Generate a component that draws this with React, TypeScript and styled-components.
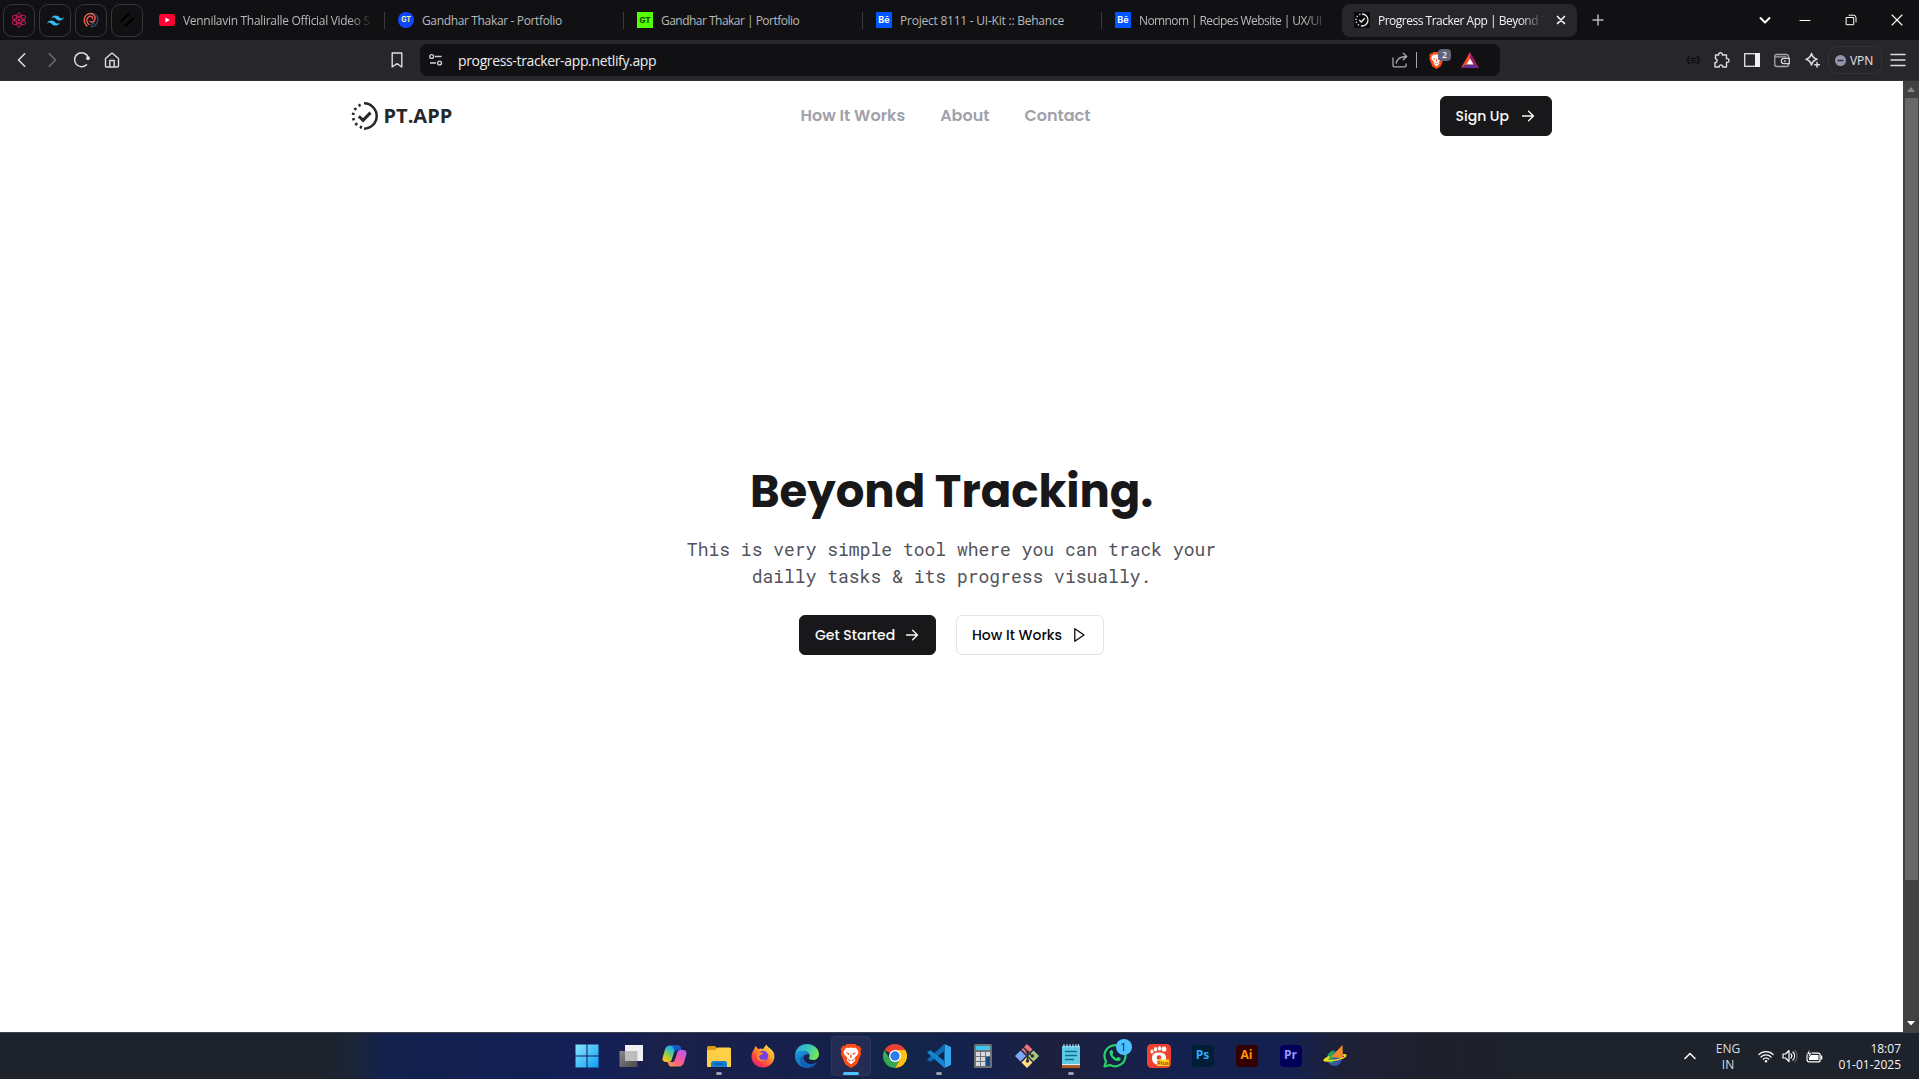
import React from "react";
import styled, { createGlobalStyle, css } from "styled-components";

const ui = `"Segoe UI", "Open Sans", "Noto Sans", sans-serif`;
const brand = `Poppins, Inter, sans-serif`;

const GlobalStyle = createGlobalStyle`
  * { box-sizing: border-box; }
  body { margin: 0; background: #fff; overflow: hidden; }
  svg { display: block; flex: none; }
  h1, p { margin: 0; }
`;

const Screen = styled.div`
  width: 1919px;
  height: 1079px;
  display: flex;
  flex-direction: column;
  overflow: hidden;
  font-family: ${ui};
`;

/* Tab strip */
const TabStrip = styled.div`
  height: 40px;
  flex: none;
  background: #111113;
  display: flex;
  align-items: center;
  padding-left: 3px;
  color: #b9b9bc;
`;
const PinnedTabs = styled.div`
  display: flex;
  gap: 4px;
  margin-right: 4px;
`;
const PinnedTab = styled.div`
  width: 32px;
  height: 33px;
  border: 1px solid #37373b;
  border-radius: 9px;
  display: grid;
  place-items: center;
`;
const TabList = styled.div`
  display: flex;
  gap: 4px;
`;
const Tab = styled.div<{ $active?: boolean; $line?: boolean }>`
  position: relative;
  width: 235px;
  height: 33px;
  border-radius: 8px;
  display: flex;
  align-items: center;
  padding: 0 7px 0 12px;
  gap: 8px;
  ${(p) => p.$active && css`
    background: #26262b;
    color: #f3f3f5;
  `}
  ${(p) => p.$line && css`
    &::after {
      content: "";
      position: absolute;
      right: -3px;
      top: 8px;
      width: 1px;
      height: 17px;
      background: #3a3a3e;
    }
  `}
`;
const TabTitle = styled.span<{ $spacing: number; $fade?: boolean; $width: number }>`
  width: ${(p) => p.$width}px;
  padding-top: 2px;
  overflow: hidden;
  white-space: nowrap;
  font-size: 12px;
  line-height: 20px;
  letter-spacing: ${(p) => p.$spacing}px;
  ${(p) => p.$fade && css`
    mask-image: linear-gradient(90deg, #000 calc(100% - 24px), transparent);
  `}
`;
const TileIcon = styled.span<{ $bg: string; $color: string; $round?: boolean; $size?: number }>`
  width: 16px;
  height: 16px;
  flex: none;
  border-radius: ${(p) => (p.$round ? "50%" : "0")};
  background: ${(p) => p.$bg};
  color: ${(p) => p.$color};
  font: 700 ${(p) => p.$size ?? 7}px/16px Inter, sans-serif;
  text-align: center;
`;
const TabClose = styled.div`
  margin-left: auto;
  width: 18px;
  display: grid;
  place-items: center;
`;
const NewTab = styled.div`
  margin-left: 13px;
  width: 16px;
`;
const WindowButtons = styled.div`
  margin-left: auto;
  display: flex;
`;
const WindowButton = styled.div<{ $w?: number }>`
  width: ${(p) => p.$w ?? 46}px;
  display: grid;
  place-items: center;
`;

/* Toolbar */
const Toolbar = styled.div`
  height: 41px;
  flex: none;
  background: #26262b;
  border-bottom: 1px solid #302f35;
  display: flex;
  align-items: center;
  padding: 0 13px 0 7px;
  color: #dcdce0;
`;
const NavButtons = styled.div`
  display: flex;
  flex: 1;
`;
const ToolButton = styled.div<{ $dim?: boolean; $w?: number }>`
  width: ${(p) => p.$w ?? 30}px;
  height: 30px;
  display: grid;
  place-items: center;
  color: ${(p) => (p.$dim ? "#6d6d72" : "inherit")};
`;
const AddressBar = styled.div`
  width: 1080px;
  height: 32px;
  margin-left: 8px;
  border-radius: 8px;
  background: #111113;
  display: flex;
  align-items: center;
  padding: 0 21px 0 8px;
`;
const Url = styled.span`
  margin-left: 14px;
  flex: 1;
  font-size: 14px;
  line-height: 20px;
  padding-top: 1px;
  letter-spacing: -0.36px;
  color: #ececef;
`;
const Divider = styled.span`
  width: 1px;
  height: 16px;
  margin: 0 11px 0 8px;
  background: #a5a5aa;
`;
const Shield = styled.div`
  position: relative;
  margin-right: 16px;
`;
const ShieldCount = styled.span`
  position: absolute;
  left: 10px;
  top: -3px;
  width: 13px;
  height: 12px;
  border-radius: 4px;
  background: #63647a;
  color: #fff;
  font-size: 8px;
  font-weight: 600;
  line-height: 12px;
  text-align: center;
`;
const ToolEnd = styled.div`
  flex: 0 0 406px;
  display: flex;
  align-items: center;
  justify-content: flex-end;
`;
const Snippet = styled.div`
  width: 28px;
  text-align: center;
  font: 700 9px/12px "DejaVu Sans Mono", monospace;
  letter-spacing: -0.5px;
  color: #0c0c0e;
`;
const Vpn = styled.div`
  width: 54px;
  height: 28px;
  margin: 0 8px 0 1px;
  border: 1px solid #323238;
  border-radius: 9px;
  display: flex;
  align-items: center;
  padding-left: 6px;
  gap: 4px;
  font-size: 12px;
  letter-spacing: -0.1px;
  color: #e6e6ea;
`;

/* Web page */
const Viewport = styled.div`
  height: 951px;
  flex: none;
  display: flex;
`;
const Page = styled.main`
  flex: 1;
  background: #fff;
  font-family: ${brand};
  color: #18181b;
`;
const Header = styled.header`
  width: 1200px;
  height: 70px;
  margin: 0 auto;
  display: grid;
  grid-template-columns: 1fr auto 1fr;
  align-items: center;
`;
const Logo = styled.div`
  display: flex;
  align-items: center;
  gap: 5px;
  margin-left: -1px;
  padding-bottom: 1px;
  font: 700 20px/28px ${ui};
  letter-spacing: 0;
  color: #27272a;
`;
const Nav = styled.nav`
  display: flex;
  gap: 35px;
  margin-right: 12px;
`;
const NavLink = styled.a`
  font-size: 16px;
  font-weight: 600;
  line-height: 24px;
  color: #a1a1aa;
`;
const Button = styled.button<{ $outline?: boolean; $w: number; $end?: boolean }>`
  width: ${(p) => p.$w}px;
  height: 40px;
  padding: 0 15px;
  display: flex;
  align-items: center;
  justify-content: space-between;
  justify-self: ${(p) => (p.$end ? "end" : "auto")};
  border-radius: 6px;
  border: 1px solid ${(p) => (p.$outline ? "#e4e4e7" : "#18181b")};
  background: ${(p) => (p.$outline ? "#fff" : "#18181b")};
  color: ${(p) => (p.$outline ? "#09090b" : "#fafafa")};
  font: 500 14px/20px ${brand};
  white-space: nowrap;
`;
const Hero = styled.section`
  padding-top: 311px;
  display: flex;
  flex-direction: column;
  align-items: center;
`;
const Title = styled.h1`
  font-size: 45px;
  font-weight: 700;
  line-height: 60px;
`;
const Lead = styled.p`
  width: 560px;
  margin-top: 14px;
  font: 400 18px/27px "Roboto Mono", "Liberation Mono", monospace;
  text-align: center;
  color: #52525b;
`;
const Actions = styled.div`
  margin-top: 25px;
  display: flex;
  gap: 20px;
`;
const Scrollbar = styled.div`
  width: 16px;
  background: #424242;
  display: flex;
  flex-direction: column;
  align-items: center;
  justify-content: space-between;
`;
const ScrollThumb = styled.div`
  width: 13px;
  height: 782px;
  margin-bottom: auto;
  background: #686868;
`;
const ScrollArrow = styled.div`
  height: 17px;
  display: grid;
  place-items: center;
`;

/* Taskbar */
const Taskbar = styled.footer`
  height: 47px;
  flex: none;
  border-top: 1px solid #3c414b;
  background: linear-gradient(90deg, #1d222b 0 320px, #1b2536 350px, #13214d 385px, #131f57 600px, #1a2149 668px, #171f4c 780px, #132549 900px, #14214e 980px, #1d203d 1050px, #14214f 1180px, #14214f 1290px, #1e2038 1340px, #1f202c 1440px, #1d222b 1520px);
  display: grid;
  grid-template-columns: 1fr auto 1fr;
  padding-right: 18px;
  color: #f4f5f7;
`;
const Apps = styled.div`
  grid-column: 2;
  display: flex;
  padding-left: 20px;
`;
const AppSlot = styled.div<{ $mark?: "open" | "active" }>`
  position: relative;
  width: 44px;
  height: 46px;
  display: grid;
  place-items: center;
  ${(p) => p.$mark === "active" && css`
    &::before {
      content: "";
      position: absolute;
      inset: 3px 2px;
      border: 1px solid #2f365c;
      border-radius: 4px;
      background: #252c54;
    }
  `}
  ${(p) => p.$mark && css`
    &::after {
      content: "";
      position: absolute;
      bottom: 4px;
      left: 50%;
      transform: translateX(-50%);
      width: ${p.$mark === "active" ? 16 : 6}px;
      height: 3px;
      border-radius: 2px;
      background: ${p.$mark === "active" ? "#4cc2ff" : "#9a9cab"};
    }
  `}
  > svg, > span { position: relative; }
`;
const AdobeTile = styled.span<{ $bg: string; $color: string }>`
  width: 22px;
  height: 22px;
  border-radius: 4px;
  background: ${(p) => p.$bg};
  color: ${(p) => p.$color};
  font: 700 12px/20px ${ui};
  text-align: center;
`;
const Unread = styled.b`
  position: absolute;
  right: 5px;
  top: 6px;
  width: 16px;
  height: 16px;
  border-radius: 50%;
  background: #4cc2ff;
  color: #10233a;
  font: 400 11px/16px ${ui};
  text-align: center;
`;
const Tray = styled.div`
  display: flex;
  align-items: center;
  justify-content: flex-end;
  font-size: 12px;
  line-height: 16px;
`;
const TrayText = styled.div<{ $w: number; $right?: boolean }>`
  width: ${(p) => p.$w}px;
  padding-top: 1px;
  text-align: ${(p) => (p.$right ? "right" : "center")};
  white-space: nowrap;
`;
const TrayIcon = styled.div`
  width: 24px;
  display: grid;
  place-items: center;
`;
const Language = styled(TrayText)`
  margin: 0 11px 0 15px;
  color: #dcdde2;
`;

type LineProps = { d: string; size?: number; w?: number; box?: string; color?: string };
const Line = ({ d, size = 16, w = 1.4, box = "0 0 16 16", color = "currentColor" }: LineProps) => (
  <svg width={size} height={size} viewBox={box} fill="none" stroke={color} strokeWidth={w} strokeLinecap="round" strokeLinejoin="round">
    <path d={d} />
  </svg>
);

const ReactAtom = () => (
  <svg width="16" height="16" viewBox="0 0 16 16" fill="none" stroke="#c2185b" strokeWidth="1">
    {[0, 60, 120].map((a) => <ellipse key={a} cx="8" cy="8" rx="2.9" ry="7.2" transform={`rotate(${a} 8 8)`} />)}
    <circle cx="8" cy="8" r="1.2" fill="#e91e63" stroke="none" />
  </svg>
);
const Tailwind = () => (
  <svg width="17" height="17" viewBox="0 0 24 24" fill="#38bdf8">
    <path d="M12 4.8c-3.2 0-5.2 1.6-6 4.8 1.2-1.6 2.6-2.2 4.2-1.8.9.23 1.57.9 2.3 1.65C13.7 10.65 15.1 12 18 12c3.2 0 5.2-1.6 6-4.8-1.2 1.6-2.6 2.2-4.2 1.8-.9-.23-1.57-.9-2.3-1.65C16.3 6.15 14.9 4.8 12 4.8zM6 12c-3.2 0-5.2 1.6-6 4.8 1.2-1.6 2.6-2.2 4.2-1.8.9.23 1.57.9 2.3 1.65C7.7 17.85 9.1 19.2 12 19.2c3.2 0 5.2-1.6 6-4.8-1.2 1.6-2.6 2.2-4.2 1.8-.9-.23-1.57-.9-2.3-1.65C10.3 13.35 8.9 12 6 12z" />
  </svg>
);
const Swirl = () => (
  <svg width="16" height="16" viewBox="0 0 16 16" fill="none" strokeLinecap="round" strokeWidth="1.3">
    <path d="M10.5 1.5C14 2.500 15.500 6 14.600 9 13.700 12.500 11 14.500 8 14.800M11.500 9.500c-.5 1.600-1.800 2.600-3.500 3" stroke="#3b4a66" />
    <path d="M4 14C0 10 .3 4 5.500 1.800 9.500.6 12.800 3.500 12 7.200c-.8 2.800-4 3.600-5.200 2" stroke="#f2625a" />
    <path d="M6 12.600C3.300 10.500 3 6.500 5.800 4.700 8 3.500 10.200 5 9.600 7" stroke="#f2625a" />
  </svg>
);
const Slashes = () => (
  <svg width="16" height="16" viewBox="0 0 16 16" stroke="#000" strokeWidth="2.2" strokeLinecap="round">
    <path d="M2.500 9 9.500 2M6.500 14 14 6.500" />
  </svg>
);
const YouTube = () => (
  <svg width="16" height="12" viewBox="0 0 16 12">
    <rect width="16" height="12" rx="3" fill="#ff0033" />
    <path d="M6.400 3.400v5.200L10.800 6z" fill="#fff" />
  </svg>
);

const Dial = ({ size, color }: { size: number; color: string }) => (
  <svg width={size} height={size} viewBox="0 0 28 28" fill="none" stroke={color}>
    <path d="M13 1.300A12.700 12.700 0 0 1 13 26.700" strokeWidth="2.5" />
    {[200, 227, 254, 280, 306, 333].map((a) => (
      <path key={a} d="M14 .7v2.700" strokeWidth="2.4" transform={`rotate(${a} 14 14)`} />
    ))}
    <path d="M7.800 14.200l4.300 4.200 7.400-7.800" strokeWidth="3" />
  </svg>
);
const TabDial = () => (
  <svg width="16" height="16" viewBox="0 0 16 16" fill="none" stroke="#e8e8e8">
    <path d="M0 0h16v16H0z" fill="#0b0b0c" stroke="none" />
    <path d="M8 2a6 6 0 0 1 0 12" strokeWidth="1.3" />
    <path d="M8 14A6 6 0 0 1 8 2" strokeWidth="1.3" strokeDasharray="1.2 1.9" />
    <path d="m5.300 8 2 2 3.500-3.700" strokeWidth="1.4" />
  </svg>
);

const Reload = () => (
  <svg width="18" height="18" viewBox="0 0 18 18" fill="none" stroke="currentColor" strokeWidth="1.5" strokeLinecap="round">
    <path d="M13.500 13.700A7 7 0 1 1 15.200 6.500" />
    <circle cx="15" cy="7.2" r="1.9" fill="currentColor" stroke="none" />
  </svg>
);
const BraveLion = ({ size }: { size: number }) => (
  <svg width={size} height={size} viewBox="0 0 24 24">
    <path d="M7.500 0h9l1.800 2 2-.2 2 3-.8 2.700.6 2.200-3.600 9.300a5 5 0 0 1-2 2.300L12 24l-4.500-2.700a5 5 0 0 1-2-2.300L1.900 9.700l.6-2.200-.8-2.700 2-3 2 .2z" fill="#ff4b14" />
    <path d="M7.300 3.600 9.500 4 12 3.600l2.500.4 2.200-.4 2.800 4-.7 2.800-3.400 3.600 1 2.400-4.400 4.200-4.400-4.200 1-2.400-3.400-3.600-.7-2.800z" fill="#fff" />
    <path d="M6.700 8.300l3.600.9-.5 2zM17.300 8.300l-3.600.9.5 2zM12 8.500l.9 4.500-.9 1.200-.9-1.200zM8.500 14.500 12 17l3.500-2.500-1.500 2.700L12 16.200l-2 1z" fill="#ff4b14" />
  </svg>
);
const BatTriangle = () => (
  <svg width="18" height="16" viewBox="0 0 18 16">
    <path d="M9 0 0 16l9-5z" fill="#ff4724" />
    <path d="M9 0l9 16-9-5z" fill="#9e1f63" />
    <path d="M0 16h18l-5-3.500H5z" fill="#662d91" />
    <path d="M9 6.500 5.400 12.500h7.200z" fill="#fff" />
  </svg>
);
const Sidebar = () => (
  <svg width="16" height="14" viewBox="0 0 16 14">
    <rect x=".7" y=".7" width="14.6" height="12.6" fill="none" stroke="#d7d7db" strokeWidth="1.4" />
    <path d="M11 0h5v14h-5z" fill="#f1f1f4" />
  </svg>
);
const Wallet = () => (
  <svg width="16" height="15" viewBox="0 0 16 15" fill="none" stroke="#a9a9ad" strokeWidth="1.3">
    <path d="M14.500 5V3.500a2 2 0 0 0-2-2h-10a1.500 1.500 0 0 0-1.700 1.600v8.400a2 2 0 0 0 2 2h9.700a2 2 0 0 0 2-2V11M1 3.800h11.500" />
    <path d="M15.300 5.300H10a2.600 2.600 0 0 0 0 5.300h5.300z" stroke="#d7d7db" />
    <path d="M10.200 8h1.400" stroke="#fff" />
  </svg>
);
const VpnDot = () => (
  <svg width="11" height="11" viewBox="0 0 11 11"><circle cx="5.5" cy="5.5" r="5.5" fill="#9394ad" /><path d="M2.500 4.800h6v1.400h-6z" fill="#2d2d36" /></svg>
);
const Tune = () => (
  <svg width="16" height="16" viewBox="0 0 16 16" fill="none" stroke="#cfcfd3" strokeWidth="1.4">
    <circle cx="3.7" cy="4.5" r="1.9" /><circle cx="11.6" cy="11" r="1.9" /><path d="M7 4.500h6.500M2 11h6" />
  </svg>
);

const WindowsLogo = () => (
  <svg width="24" height="24" viewBox="0 0 24 24">
    <defs><linearGradient id="win" gradientUnits="userSpaceOnUse" x1="0" y1="0" x2="24" y2="24"><stop stopColor="#8be6fd" /><stop offset="1" stopColor="#0a9cf5" /></linearGradient></defs>
    <path d="M.5 .5h11v11H.5zM12.500 .5h11v11h-11zM.5 12.500h11v11H.5zM12.500 12.500h11v11h-11z" fill="url(#win)" />
  </svg>
);
const TaskView = () => (
  <svg width="24" height="24" viewBox="0 0 24 24">
    <defs><linearGradient id="tv" y2="1" x2="1"><stop stopColor="#8a8a8a" /><stop offset="1" stopColor="#484848" /></linearGradient></defs>
    <path d="M.5 7h18v16H.5z" fill="url(#tv)" /><path d="M6 1h18v16H6z" fill="#f0f0f1" /><path d="M6 7h12.500v10H6z" fill="#bdbdbe" />
  </svg>
);
const Copilot = () => (
  <svg width="25" height="24" viewBox="0 0 25 24">
    <defs>
      <linearGradient id="cpl" x1="1" y1="0" x2=".2" y2="1"><stop stopColor="#1683e8" /><stop offset=".45" stopColor="#2bc2c9" /><stop offset=".75" stopColor="#a6cf3a" /><stop offset="1" stopColor="#ffbe1e" /></linearGradient>
      <linearGradient id="cpr" x1=".8" y1="0" x2=".2" y2="1"><stop stopColor="#b45cf0" /><stop offset=".5" stopColor="#f2559f" /><stop offset="1" stopColor="#ff8f4a" /></linearGradient>
    </defs>
    <path d="M16 1.500c1.600 0 2.300 1 2.700 2.500L19.500 6H15c-1.600 0-2.500 1-3 2.600l-2.300 7.200c-.5 1.500-1.300 2.200-2.800 2.200H4c-2.500 0-4-1.500-3.400-4.300L3 5.500C4 2.600 5.500 1.500 8 1.500z" fill="url(#cpl)" />
    <path d="M9 22.500c-1.600 0-2.300-1-2.700-2.500L5.500 18H10c1.600 0 2.500-1 3-2.600l2.300-7.200C15.800 6.700 16.600 6 18 6h3c2.500 0 4 1.500 3.400 4.300L22 18.500c-1 2.900-2.500 4-5 4z" fill="url(#cpr)" />
    <path d="M8 1.500h8c1.600 0 2.300 1 2.700 2.500L19.500 6H15c-1.200 0-2 .5-2.500 1.600L11.500 4c-.5-1.600-1.500-2.500-3.500-2.500z" fill="#1459c9" />
  </svg>
);
const Folder = () => (
  <svg width="24" height="22" viewBox="0 0 24 22">
    <path d="M0 2.500A1.500 1.500 0 0 1 1.500 1H8l2.500 2.500V6H0z" fill="#dc9a0c" />
    <path d="M0 5h8l2.500-2.500h12A1.500 1.500 0 0 1 24 4v17a1 1 0 0 1-1 1H1a1 1 0 0 1-1-1z" fill="#ffcf48" />
    <path d="M4 22v-3.500A2.500 2.500 0 0 1 6.500 16h11a2.500 2.500 0 0 1 2.500 2.500V22z" fill="#1181d4" /><path d="M7.500 19h9" stroke="#0b4f96" strokeWidth="1.3" />
  </svg>
);
const Firefox = () => (
  <svg width="24" height="24" viewBox="0 0 24 24">
    <defs><linearGradient id="ff" x1=".9" y1="0" x2=".2" y2="1"><stop stopColor="#fff04a" /><stop offset=".4" stopColor="#ffa02f" /><stop offset=".7" stopColor="#ff4a3d" /><stop offset="1" stopColor="#e01b78" /></linearGradient></defs>
    <path d="M3 5.500 4.500 2l2.700 3 2.300-.5L12 5l3.500-4.500c.5 2 3 3.500 4.700 5C23 8 24 11 23 15.200 21.800 20.300 17 23.500 12 23.500 5.500 23.500.5 19 .5 12.500.5 9.800 1.500 7.300 3 5.500z" fill="url(#ff)" />
    <circle cx="12" cy="12" r="5.3" fill="#7a3fe0" />
    <path d="M6 8.500c2.500-1.300 4-.2 6.500.8-1.400 1.600-3.500 1.200-4.300 2.900-.4 3.200 3.600 4.600 7 3-2 3.300-7.700 2.700-9.400-1.200z" fill="#ff8a2c" />
  </svg>
);
const Edge = () => (
  <svg width="24" height="24" viewBox="0 0 24 24">
    <defs>
      <linearGradient id="ed1" x2="1" y2=".3"><stop stopColor="#2ba6e8" /><stop offset=".6" stopColor="#36c8ba" /><stop offset="1" stopColor="#74e35a" /></linearGradient>
      <linearGradient id="ed2" y2="1"><stop stopColor="#1a9be2" /><stop offset="1" stopColor="#0d4fa6" /></linearGradient>
    </defs>
    <path d="M0 11C.5 4.500 5.500 0 12 0s12 4.800 12 10.200c0 3.500-2.700 5.800-6 5.800-2.600 0-4.600-.9-4.200-1.900 1.200-1.500 1.300-4.200-1.300-5.800C8.300 6 2.500 6.500 0 11z" fill="url(#ed1)" />
    <path d="M0 12C0 8.500 3.500 6.500 7.500 6.700 11 7 14 9.300 14.500 11c-1.200-1-3.500-1.200-5 .2-2.500 2.300-.5 7.600 4.500 8.600 3 .6 5.500-.4 7.800-1.600C20.500 21.500 16.500 24 12 24 5.300 24 0 18.800 0 12z" fill="url(#ed2)" />
    <path d="M7.800 13c-.6 5 3.500 9.500 8.200 9.700-7 2.500-12-3-10.800-8 .4-1.500 1.400-2.500 2.900-3.400z" fill="#1160b7" />
  </svg>
);
const Chrome = () => (
  <svg width="24" height="24" viewBox="0 0 24 24">
    <path d="M12 12 1.600 6A12 12 0 0 1 22.400 6H12z" fill="#ea4335" />
    <path d="M12 12 17.200 15 12 24A12 12 0 0 1 1.600 6L6.800 15z" fill="#34a853" />
    <path d="M12 6h10.400A12 12 0 0 1 12 24l5.200-9z" fill="#fbc116" />
    <circle cx="12" cy="12" r="6" fill="#fff" /><circle cx="12" cy="12" r="4.7" fill="#2b7de9" />
  </svg>
);
const VsCode = () => (
  <svg width="24" height="24" viewBox="0 0 24 24">
    <path d="M17.500 0 24 3v18l-6.500 3z" fill="#30a7ef" />
    <path d="M17.500 0v6.800L3.300 18 0 15.500z" fill="#0e6cb5" /><path d="M17.500 24v-6.800L3.300 6 0 8.500z" fill="#1485d2" />
  </svg>
);
const Calculator = () => (
  <svg width="18" height="24" viewBox="0 0 18 24">
    <rect width="18" height="24" rx="1.5" fill="#6e7277" /><path d="M2 2h14v4H2z" fill="#3fc8ee" />
    {[8, 13, 18].map((y) => [2, 7, 12].map((x) => <path key={`${x}-${y}`} d={`M${x} ${y}h4v4h-4z`} fill="#d8dade" />))}
    <path d="M12 13h4v9h-4z" fill="#174a86" />
  </svg>
);
const GitBash = () => (
  <svg width="24" height="24" viewBox="0 0 24 24">
    <path d="M12 0l5.500 5.500L12 11 6.500 5.500z" fill="#f0757a" /><path d="M5.500 6.500 11 12l-5.500 5.500L0 12z" fill="#7fa8f5" />
    <path d="M18.500 6.500 24 12l-5.500 5.500L13 12z" fill="#a8cf7c" /><path d="M12 13l5.500 5.500L12 24l-5.500-5.500z" fill="#ffdf85" />
    <path d="M8 3l5 5 4 4M12.500 8v9" stroke="#30323b" strokeWidth="1.5" fill="none" /><g fill="#30323b"><circle cx="12.5" cy="8" r="1.8" /><circle cx="17.5" cy="12" r="1.8" /><circle cx="12.5" cy="17" r="1.8" /></g>
  </svg>
);
const Notepad = () => (
  <svg width="18" height="24" viewBox="0 0 18 24">
    <path d="M0 2h18v18H0z" fill="#5ecbe6" /><path d="M0 20h18v1.500H0z" fill="#e8e8e8" /><path d="M0 21.500h18V24H0z" fill="#b55a16" />
    <path d="M2 .3v3M5 .3v3M8 .3v3M11 .3v3M14 .3v3M16.500 .3v3" stroke="#c9f1fb" strokeWidth="1.2" /><path d="M3 7.500h12M3 11.500h12M3 15.500h9" stroke="#116f92" strokeWidth="1.7" />
  </svg>
);
const WhatsApp = () => (
  <svg width="24" height="24" viewBox="0 0 24 24">
    <path d="M1.500 22.500 3 17.200A10.500 10.500 0 1 1 7 21z" fill="none" stroke="#25d366" strokeWidth="2.2" strokeLinejoin="round" />
    <path d="M7.500 6.500c1-.8 1.800-.3 2.200.6l.6 1.500c.2.700-.4 1.200-.9 1.800 1 1.900 2.400 3 4.200 3.800.7-.6 1.100-1.500 1.800-1.200l2 1c.8.500.2 2-.8 2.700-1.800 1-4.800-.2-6.800-2-2.200-2-4.500-6.200-2.300-8.200z" fill="#25d366" />
  </svg>
);
const Paw = () => (
  <svg width="24" height="24" viewBox="0 0 24 24">
    <rect width="24" height="24" rx="4.5" fill="#ee4231" />
    <g fill="#fff"><ellipse cx="5" cy="7.5" rx="1.6" ry="2" /><ellipse cx="8.5" cy="5.2" rx="1.6" ry="2.2" /><ellipse cx="12.5" cy="4.4" rx="1.7" ry="2.2" /><ellipse cx="17" cy="5" rx="2.4" ry="2.6" /><path d="M5 14c0-4 3-5.700 7-5.500 4.500 0 7.500 2 7 6-.5 4.500-3 6.500-7 6.500-4.500 0-7-3-7-7z" /></g>
    <circle cx="12" cy="13.5" r="2.3" fill="#ee4231" />
    <path d="M10 15.500h12V22H10z" fill="#ffd51e" />
    <text x="16" y="20.7" textAnchor="middle" fontSize="5.5" fontWeight="700" fontFamily="Open Sans, sans-serif" fill="#c23a16">Plus</text>
  </svg>
);
const Planet = () => (
  <svg width="24" height="22" viewBox="0 0 24 22">
    <circle cx="11.5" cy="13.5" r="7.5" fill="#3654a5" /><path d="M4.500 12c0-4 4-6.500 6.500-6.500L10 18c-3.500.5-5.500-2-5.500-6z" fill="#29a35a" />
    <path d="M19.500 0 8 12l12 1.500z" fill="#f08a2c" />
    <path d="M6 11C1.500 13 0 14.500.5 16c1.500 1.500 11 .5 17-1.500 4.500-1.500 6.500-3 6-4.500-.5-1-2-1-3.500-.8v1.500c1 0 1.500.3 1 .8-2 2-10.500 3.800-15 3.300-1.500-.3 0-1.600 1.500-2.300z" fill="#efdc1e" />
  </svg>
);

const Wifi = () => (
  <svg width="16" height="13" viewBox="0 0 16 13" fill="none" stroke="#fff" strokeWidth="1.2" strokeLinecap="round">
    <path d="M.8 4.600a10.200 10.200 0 0 1 14.400 0M3 7a7 7 0 0 1 10 0M5.200 9.200a4 4 0 0 1 5.600 0" /><circle cx="8" cy="11.3" r="1.2" fill="#fff" stroke="none" />
  </svg>
);
const Volume = () => (
  <svg width="17" height="14" viewBox="0 0 17 14" fill="none" stroke="#fff" strokeWidth="1.2" strokeLinejoin="round" strokeLinecap="round">
    <path d="M1 5v4h2.500L7 12.500v-11L3.500 5zM9 5a3 3 0 0 1 0 4M11 3a6 6 0 0 1 0 8" /><path d="M13 1.300a8.500 8.500 0 0 1 0 11.400" stroke="#5b606b" />
  </svg>
);
const Battery = () => (
  <svg width="17" height="15" viewBox="0 0 17 15">
    <rect x="1.1" y="4.1" width="13" height="8.8" rx="2" fill="none" stroke="#fff" strokeWidth="1.2" /><path d="M3 6h9.500v5H3zM14.800 6.500h1.500v4h-1.500z" fill="#fff" />
    <path d="M4 0 .3 5.300h2.500L2 9.500 6 4H3.500z" fill="#fff" stroke="#1d222b" strokeWidth=".7" />
  </svg>
);

const tabs = [
  { title: "Vennilavin Thaliralle Official Video S", icon: <YouTube />, spacing: -0.3, fade: true },
  { title: "Gandhar Thakar - Portfolio", icon: <TileIcon $bg="#1148ff" $color="#f4f7a0" $round>GT</TileIcon>, spacing: -0.35 },
  { title: "Gandhar Thakar | Portfolio", icon: <TileIcon $bg="#54ff05" $color="#12350a" $size={8}>GT</TileIcon>, spacing: -0.52 },
  { title: "Project 8111 - UI-Kit :: Behance", icon: <TileIcon $bg="#0057ff" $color="#fff" $size={9}>Bē</TileIcon>, spacing: -0.23 },
  { title: "Nomnom | Recipes Website | UX/UI", icon: <TileIcon $bg="#0057ff" $color="#fff" $size={9}>Bē</TileIcon>, spacing: -0.6, fade: true },
];

const taskApps: { icon: React.ReactNode; mark?: "open" | "active" }[] = [
  { icon: <WindowsLogo /> },
  { icon: <TaskView /> },
  { icon: <Copilot /> },
  { icon: <Folder />, mark: "open" },
  { icon: <Firefox /> },
  { icon: <Edge /> },
  { icon: <BraveLion size={24} />, mark: "active" },
  { icon: <Chrome /> },
  { icon: <VsCode />, mark: "open" },
  { icon: <Calculator /> },
  { icon: <GitBash /> },
  { icon: <Notepad />, mark: "open" },
  { icon: <><WhatsApp /><Unread>1</Unread></> },
  { icon: <Paw /> },
  { icon: <AdobeTile $bg="#001e36" $color="#31a8ff">Ps</AdobeTile> },
  { icon: <AdobeTile $bg="#330000" $color="#ff9a00">Ai</AdobeTile> },
  { icon: <AdobeTile $bg="#00005b" $color="#9999ff">Pr</AdobeTile> },
  { icon: <Planet /> },
];

const ArrowRight = () => <Line d="M2.500 8h11M8.600 3.200 13.500 8l-4.900 4.800" w={1.3} />;

export default function App() {
  return (
    <Screen>
      <GlobalStyle />
      <TabStrip>
        <PinnedTabs>
          <PinnedTab><ReactAtom /></PinnedTab>
          <PinnedTab><Tailwind /></PinnedTab>
          <PinnedTab><Swirl /></PinnedTab>
          <PinnedTab><Slashes /></PinnedTab>
        </PinnedTabs>
        <TabList>
          {tabs.map((t, i) => (
            <Tab key={i} $line={i < 4}>
              {t.icon}
              <TabTitle $spacing={t.spacing} $fade={t.fade} $width={190}>{t.title}</TabTitle>
            </Tab>
          ))}
          <Tab $active>
            <TabDial />
            <TabTitle $spacing={-0.5} $fade $width={168}>Progress Tracker App | Beyond T</TabTitle>
            <TabClose><Line d="M4.500 4.500l7 7M11.500 4.500l-7 7" w={1.7} /></TabClose>
          </Tab>
        </TabList>
        <NewTab><Line d="M8 3v10M3 8h10" color="#b5b5b8" w={1.5} /></NewTab>
        <WindowButtons>
          <WindowButton $w={34}><Line d="M3.500 6 8 10.500 12.500 6" w={1.9} color="#fff" /></WindowButton>
          <WindowButton><Line d="M3 8.500h10" w={1} color="#fff" /></WindowButton>
          <WindowButton><Line d="M3.500 5.500h7.200v7.200H3.500zM6 3.200h4.500a2.500 2.500 0 0 1 2.500 2.500V10" w={1} color="#fff" /></WindowButton>
          <WindowButton $w={45}><Line d="M3 3l10 10M13 3 3 13" w={1.1} color="#fff" /></WindowButton>
        </WindowButtons>
      </TabStrip>

      <Toolbar>
        <NavButtons>
          <ToolButton><Line d="M10.700 1.800 4.500 8l6.200 6.200" w={1.6} /></ToolButton>
          <ToolButton $dim><Line d="M5.300 1.800 11.500 8l-6.200 6.200" w={1.5} /></ToolButton>
          <ToolButton><Reload /></ToolButton>
          <ToolButton><Line d="M1.500 6.500 8 1l6.500 5.500V14a1 1 0 0 1-1 1h-11a1 1 0 0 1-1-1zM5.800 15V8.500h4.400V15" w={1.4} /></ToolButton>
        </NavButtons>
        <ToolButton><Line d="M3.200 1h9.600v14L8 11.700 3.200 15z" w={1.4} /></ToolButton>
        <AddressBar>
          <Tune />
          <Url>progress-tracker-app.netlify.app</Url>
          <Line d="M1 6v7.500a1.300 1.300 0 0 0 1.300 1.300h10.500a1.300 1.300 0 0 0 1.300-1.300V12M4.200 11.200C5 6.500 8 4.500 14.500 4.500M11.300 1.200l3.500 3.300-3.500 3.300" color="#a9a9ad" w={1.3} />
          <Divider />
          <Shield><BraveLion size={17} /><ShieldCount>2</ShieldCount></Shield>
          <BatTriangle />
        </AddressBar>
        <ToolEnd>
          <Snippet>{"{≡}"}</Snippet>
          <ToolButton><Line size={18} box="0 0 18 18" d="M2.500 4h3.200c-.8-3 4.300-3 3.600 0h4.200v3.700c3.300-.8 3.300 4.300 0 3.600V16H9.700c.5-2.800-4-2.800-3.500 0H2v-4.500c2.700.6 2.700-4 .5-3.600z" /></ToolButton>
          <ToolButton><Sidebar /></ToolButton>
          <ToolButton><Wallet /></ToolButton>
          <ToolButton><Line size={17} box="0 0 17 17" d="M7.500 1.500c.8 3.500 2 4.700 5.500 5.700-3.500 1-4.700 2.200-5.500 5.800C6.700 9.400 5.500 8.200 2 7.200c3.500-1 4.700-2.200 5.500-5.700zM13 10.500v4.500M10.800 12.800h4.500" w={1.5} /></ToolButton>
          <Vpn><VpnDot />VPN</Vpn>
          <Line d="M1 2.500h14M1 8h14M1 13.500h14" w={1.5} />
        </ToolEnd>
      </Toolbar>

      <Viewport>
        <Page>
          <Header>
            <Logo><Dial size={28} color="#27272a" />PT.APP</Logo>
            <Nav>
              <NavLink>How It Works</NavLink>
              <NavLink>About</NavLink>
              <NavLink>Contact</NavLink>
            </Nav>
            <Button $w={112} $end>Sign Up<ArrowRight /></Button>
          </Header>
          <Hero>
            <Title>Beyond Tracking.</Title>
            <Lead>This is very simple tool where you can track your dailly tasks &amp; its progress visually.</Lead>
            <Actions>
              <Button $w={137}>Get Started<ArrowRight /></Button>
              <Button $w={148} $outline>How It Works<Line d="M2.800 1.700v12.600L12 8z" w={1.3} /></Button>
            </Actions>
          </Hero>
        </Page>
        <Scrollbar>
          <ScrollArrow><svg width="8" height="5" viewBox="0 0 8 5"><path d="M4 0l4 5H0z" fill="#868686" /></svg></ScrollArrow>
          <ScrollThumb />
          <ScrollArrow><svg width="8" height="5" viewBox="0 0 8 5"><path d="M0 0h8L4 4.500z" fill="#fff" /></svg></ScrollArrow>
        </Scrollbar>
      </Viewport>

      <Taskbar>
        <Apps>
          {taskApps.map((a, i) => <AppSlot key={i} $mark={a.mark}>{a.icon}</AppSlot>)}
        </Apps>
        <Tray>
          <Line d="M3 10.500 8 5.500l5 5" w={1.6} />
          <Language $w={30}>ENG<br />IN</Language>
          <TrayIcon><Wifi /></TrayIcon>
          <TrayIcon><Volume /></TrayIcon>
          <TrayIcon><Battery /></TrayIcon>
          <TrayText $w={75} $right>18:07<br />01-01-2025</TrayText>
        </Tray>
      </Taskbar>
    </Screen>
  );
}
